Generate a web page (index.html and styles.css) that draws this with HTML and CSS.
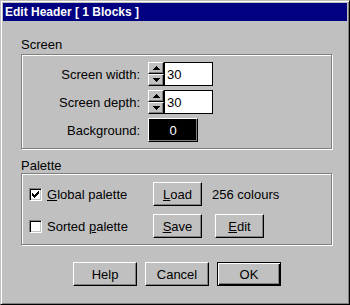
FILE: index.html
```html
<!DOCTYPE html>
<html lang="en">
<head>
    <meta charset="UTF-8">
    <meta name="viewport" content="width=device-width, initial-scale=1.0">
    <title>Edit Header</title>
    <link rel="stylesheet" href="styles.css">
</head>
<body>
    <div class="window">
        <div class="titlebar">Edit Header [ 1 Blocks ]</div>
        <div class="content">
            <div class="group-label">Screen</div>
            <div class="group screen-group">
                <div class="field-row">
                    <label class="field-label">Screen width:</label>
                    <div class="spinner">
                        <div class="spin-buttons">
                            <button class="btn spin-btn"><svg width="7" height="4" viewBox="0 0 7 4"><path d="M3 0h1v1h1v1h1v1h1v1h-7v-1h1v-1h1v-1h1z"/></svg></button>
                            <button class="btn spin-btn"><svg width="7" height="4" viewBox="0 0 7 4"><path d="M0 0h7v1h-1v1h-1v1h-1v1h-1v-1h-1v-1h-1v-1h-1z"/></svg></button>
                        </div>
                        <input class="num-field" type="text" value="30">
                    </div>
                </div>
                <div class="field-row">
                    <label class="field-label">Screen depth:</label>
                    <div class="spinner">
                        <div class="spin-buttons">
                            <button class="btn spin-btn"><svg width="7" height="4" viewBox="0 0 7 4"><path d="M3 0h1v1h1v1h1v1h1v1h-7v-1h1v-1h1v-1h1z"/></svg></button>
                            <button class="btn spin-btn"><svg width="7" height="4" viewBox="0 0 7 4"><path d="M0 0h7v1h-1v1h-1v1h-1v1h-1v-1h-1v-1h-1v-1h-1z"/></svg></button>
                        </div>
                        <input class="num-field" type="text" value="30">
                    </div>
                </div>
                <div class="field-row">
                    <label class="field-label">Background:</label>
                    <button class="btn colour-btn">0</button>
                </div>
            </div>

            <div class="group-label palette-label">Palette</div>
            <div class="group palette-group">
                <label class="check-label">
                    <span class="checkbox"><svg width="7" height="7" viewBox="0 0 7 7"><path d="M0 2h1v3h-1zM1 3h1v3h-1zM2 4h1v3h-1zM3 3h1v3h-1zM4 2h1v3h-1zM5 1h1v3h-1zM6 0h1v3h-1z"/></svg></span>
                    <span><u>G</u>lobal palette</span>
                </label>
                <button class="btn"><u>L</u>oad</button>
                <span class="colours-text">256 colours</span>

                <label class="check-label">
                    <span class="checkbox"></span>
                    <span>Sorted <u>p</u>alette</span>
                </label>
                <button class="btn"><u>S</u>ave</button>
                <button class="btn edit-btn"><u>E</u>dit</button>
            </div>

            <div class="dialog-buttons">
                <button class="btn dialog-btn">Help</button>
                <button class="btn dialog-btn">Cancel</button>
                <button class="btn dialog-btn default-btn">OK</button>
            </div>
        </div>
    </div>
</body>
</html>
```

FILE: styles.css
```css
*{
    box-sizing: border-box;
}
body{
    margin: 0;
    font-family: "Liberation Sans", Arial, sans-serif;
    font-size: 13px;
    color: #000;
    background-color: #c0c0c0;
}
.window{
    width: 350px;
    height: 305px;
    padding: 2px;
    background-color: #c0c0c0;
    border: 1px solid;
    border-color: #c0c0c0 #000 #000 #c0c0c0;
    box-shadow: inset 1px 1px #fff, inset -1px -1px #808080;
}
.titlebar{
    height: 18px;
    line-height: 18px;
    padding-left: 2px;
    background-color: #000080;
    color: #fff;
    font-size: 12px;
    font-weight: 700;
    white-space: nowrap;
}
.content{
    padding: 16px 15px 0 18px;
}
.group-label{
    line-height: 15px;
    margin-bottom: 2px;
}
.palette-label{
    margin-top: 9px;
    margin-bottom: 0;
}
.group{
    width: 311px;
    border: 1px solid #808080;
    box-shadow: inset 1px 1px #fff, 1px 1px #fff;
}
.screen-group{
    height: 95px;
    padding-top: 7px;
    display: flex;
    flex-direction: column;
    gap: 4px;
}
.field-row{
    height: 24px;
    display: flex;
    align-items: center;
    gap: 8px;
}
.field-label{
    width: 118px;
    text-align: right;
}
.btn{
    margin: 0;
    padding: 0;
    font: inherit;
    color: #000;
    background-color: #c0c0c0;
    border: 1px solid;
    border-color: #fff #000 #000 #fff;
    box-shadow: inset -1px -1px #808080;
    height: 24px;
}
.spinner{
    display: flex;
}
.spin-buttons{
    display: flex;
    flex-direction: column;
}
.spin-btn{
    width: 16px;
    height: 12px;
    display: flex;
    align-items: center;
    justify-content: center;
}
.spin-btn svg{
    display: block;
    shape-rendering: crispEdges;
}
.num-field{
    width: 49px;
    height: 24px;
    margin: 0;
    padding: 0 2px;
    font: inherit;
    color: #000;
    background-color: #fff;
    border: 1px solid #000;
    outline: none;
}
.colour-btn{
    width: 50px;
    background-color: #000;
    color: #fff;
}
.palette-group{
    height: 72px;
    padding: 8px 0 0 7px;
    display: grid;
    grid-template-columns: 124px 49px auto;
    grid-auto-rows: 24px;
    row-gap: 8px;
    align-items: center;
    justify-items: start;
}
.check-label{
    display: flex;
    align-items: center;
    gap: 5px;
}
.checkbox{
    width: 13px;
    height: 13px;
    display: flex;
    align-items: center;
    justify-content: center;
    background-color: #fff;
    border: 1px solid;
    border-color: #808080 #fff #fff #808080;
    box-shadow: inset 1px 1px #000, inset -1px -1px #c0c0c0;
}
.checkbox svg{
    display: block;
    shape-rendering: crispEdges;
}
.palette-group .btn{
    width: 49px;
}
.colours-text{
    margin-left: 10px;
}
.edit-btn{
    margin-left: 13px;
}
.dialog-buttons{
    margin-top: 17px;
    padding-left: 52px;
    display: flex;
    gap: 8px;
}
.dialog-btn{
    width: 64px;
}
.default-btn{
    border-color: #000;
    box-shadow: inset 1px 1px #fff, inset -1px -1px #000, inset -2px -2px #808080;
}
```
